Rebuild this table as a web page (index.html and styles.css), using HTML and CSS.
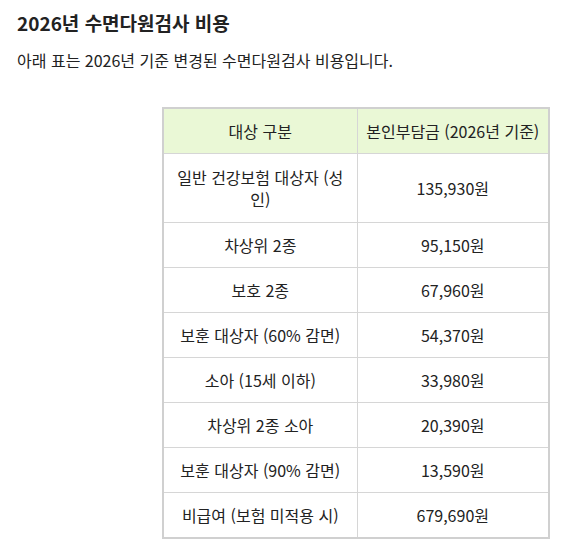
FILE: index.html
```html
<!DOCTYPE html>
<html lang="ko">
<head>
    <meta charset="UTF-8">
    <meta name="viewport" content="width=device-width, initial-scale=1.0">
    <title>2026년 수면다원검사 비용</title>
    <link rel="stylesheet" href="styles.css">
</head>
<body>
    <div class="container">
        <h2 class="title">2026년 수면다원검사 비용</h2>
        <p class="intro">아래 표는 2026년 기준 변경된 수면다원검사 비용입니다.</p>

        <div class="table-wrap">
            <table class="cost-table">
                <colgroup>
                    <col class="col-type">
                    <col class="col-cost">
                </colgroup>
                <thead>
                    <tr>
                        <th>대상 구분</th>
                        <th>본인부담금 (2026년 기준)</th>
                    </tr>
                </thead>
                <tbody>
                    <tr class="tall">
                        <td>일반 건강보험 대상자 (성인)</td>
                        <td>135,930원</td>
                    </tr>
                    <tr>
                        <td>차상위 2종</td>
                        <td>95,150원</td>
                    </tr>
                    <tr>
                        <td>보호 2종</td>
                        <td>67,960원</td>
                    </tr>
                    <tr>
                        <td>보훈 대상자 (60% 감면)</td>
                        <td>54,370원</td>
                    </tr>
                    <tr>
                        <td>소아 (15세 이하)</td>
                        <td>33,980원</td>
                    </tr>
                    <tr>
                        <td>차상위 2종 소아</td>
                        <td>20,390원</td>
                    </tr>
                    <tr>
                        <td>보훈 대상자 (90% 감면)</td>
                        <td>13,590원</td>
                    </tr>
                    <tr>
                        <td>비급여 (보험 미적용 시)</td>
                        <td>679,690원</td>
                    </tr>
                </tbody>
            </table>
        </div>
    </div>
</body>
</html>
```

FILE: styles.css
```css
body {
    font-family: "Noto Sans CJK KR", "Noto Sans", sans-serif;
    color: #222;
    background-color: #fff;
    margin: 0;
}
.container {
    padding: 8px 21px 0 17px;
}
.title {
    margin: 0;
    font-size: 19px;
    font-weight: bold;
    line-height: 30px;
}
.intro {
    margin: 10px 0 0;
    font-size: 16px;
    line-height: 24px;
}
.table-wrap {
    display: flex;
    justify-content: flex-end;
    margin-top: 35px;
}
.cost-table {
    width: 386px;
    border-collapse: collapse;
    border: 2px solid #d0d0d0;
    table-layout: fixed;
}
.col-type {
    width: 194px;
}
.col-cost {
    width: 192px;
}
.cost-table th,
.cost-table td {
    border: 1px solid #d6d6d6;
    text-align: center;
    font-size: 16px;
    font-weight: normal;
    line-height: 22px;
    height: 44px;
    padding: 0 12px;
}
.cost-table th {
    background-color: #eaf8d6;
    padding: 0 2px;
}
.tall td {
    height: 68px;
}
```
